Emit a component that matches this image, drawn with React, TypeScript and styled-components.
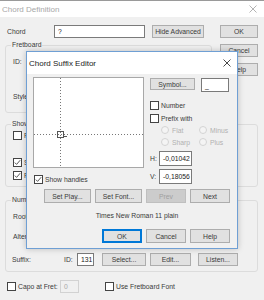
import styled, { createGlobalStyle } from 'styled-components';

const GlobalStyle = createGlobalStyle`
  html, body { margin: 0; padding: 0; }
  body {
    width: 264px;
    height: 300px;
    overflow: hidden;
    background: #f0f0f0;
    font-family: 'Liberation Sans', Arial, sans-serif;
    font-size: 6.8px;
    color: #3a3a3a;
  }
`;

const CheckMark = () => (
  <svg width="7" height="7" viewBox="0 0 7 7">
    <polyline points="0.8,3.6 2.6,5.4 6.2,1.2" fill="none" stroke="#444" strokeWidth="0.9" />
  </svg>
);

const CloseIcon = ({ color }: { color: string }) => (
  <svg width="8" height="8" viewBox="0 0 8 8">
    <path d="M0.5 0.5 L7.5 7.5 M7.5 0.5 L0.5 7.5" stroke={color} strokeWidth="0.9" />
  </svg>
);

const Check = ({ checked, label, mt }: { checked?: boolean; label: string; mt?: number }) => (
  <CheckRow $mt={mt}>
    <Box>{checked && <CheckMark />}</Box>
    <span>{label}</span>
  </CheckRow>
);

const Radio = ({ label }: { label: string }) => (
  <RadioRow>
    <Dot />
    <span>{label}</span>
  </RadioRow>
);

export default function App() {
  return (
    <>
      <GlobalStyle />
      <Window>
        <TitleBar>
          <Title $active={false}>Chord Definition</Title>
          <CloseIcon color="#aaa" />
        </TitleBar>
        <Body>
          <TopGrid>
            <LeftCol>
              <ChordRow>
                <Label $w={47}>Chord</Label>
                <TextInput $w={91}>?</TextInput>
                <Button $w={52}>Hide Advanced</Button>
              </ChordRow>
              <Group $h={72}>
                <legend>Fretboard</legend>
                <GroupRow>
                  <Label $w={40}>ID:</Label>
                </GroupRow>
                <GroupRow $top={22}>
                  <Label $w={40}>Style</Label>
                </GroupRow>
              </Group>
            </LeftCol>
            <RightCol>
              <Button $w={38}>OK</Button>
              <Button $w={38}>Cancel</Button>
              <Button $w={38}>Help</Button>
            </RightCol>
          </TopGrid>

          <Group $h={67} $mt={7}>
            <legend>Show</legend>
            <ShowList>
              <Check label="Root" />
              <Check checked label="Suffix" mt={18} />
              <Check checked label="Fret" mt={4} />
            </ShowList>
          </Group>

          <Group $h={76} $mt={9}>
            <legend>Numeric</legend>
            <GroupRow $top={4}>
              <Label $w={40}>Root</Label>
            </GroupRow>
            <GroupRow $top={7}>
              <Label $w={40}>Alteration</Label>
            </GroupRow>
            <SuffixRow>
              <Label $w={52}>Suffix:</Label>
              <Label $w={13}>ID:</Label>
              <TextInput $w={17}>131</TextInput>
              <Button $w={44} $ml={8}>Select...</Button>
              <Button $w={41} $ml={4}>Edit...</Button>
              <Button $w={40} $ml={7}>Listen...</Button>
            </SuffixRow>
          </Group>

          <BottomRow>
            <Check label="Capo at Fret:" />
            <TextInput $w={19} $disabled>0</TextInput>
            <BottomCheck>
              <Check label="Use Fretboard Font" />
            </BottomCheck>
          </BottomRow>
        </Body>

        <Dialog>
          <DialogTitle>
            <Title $active>Chord Suffix Editor</Title>
            <CloseIcon color="#333" />
          </DialogTitle>
          <DialogBody>
            <EditorArea>
              <CanvasCol>
                <Canvas>
                  <svg width="109" height="89" viewBox="0 0 109 89">
                    <line x1="26.5" y1="0" x2="26.5" y2="89" stroke="#777" strokeWidth="1" strokeDasharray="1 2" />
                    <line x1="0" y1="56.5" x2="109" y2="56.5" stroke="#777" strokeWidth="1" strokeDasharray="1 2" />
                    <rect x="23.5" y="53.5" width="6" height="6" fill="none" stroke="#555" strokeWidth="1" />
                    <line x1="29.5" y1="58.5" x2="33" y2="58.5" stroke="#555" strokeWidth="1" />
                  </svg>
                </Canvas>
                <Check checked label="Show handles" />
              </CanvasCol>
              <Controls>
                <SymbolRow>
                  <Button $w={45} $h={12}>Symbol...</Button>
                  <TextInput $w={28} $h={14}>_</TextInput>
                </SymbolRow>
                <Check label="Number" mt={9} />
                <Check label="Prefix with" mt={4} />
                <RadioGrid>
                  <Radio label="Flat" />
                  <Radio label="Minus" />
                  <Radio label="Sharp" />
                  <Radio label="Plus" />
                </RadioGrid>
                <CoordRow $mt={5}>
                  <span>H:</span>
                  <TextInput $w={33} $h={15}>-0,01042</TextInput>
                </CoordRow>
                <CoordRow $mt={3}>
                  <span>V:</span>
                  <TextInput $w={33} $h={15}>-0,18056</TextInput>
                </CoordRow>
              </Controls>
            </EditorArea>
            <Footer>
              <ButtonRow>
                <Button $w={47} $h={14}>Set Play...</Button>
                <Button $w={47} $h={14}>Set Font...</Button>
                <Button $w={40} $h={14} $disabled>Prev</Button>
                <Button $w={40} $h={14}>Next</Button>
              </ButtonRow>
              <FontName>Times New Roman 11 plain</FontName>
              <ButtonRow>
                <Button $w={40} $h={14} $default>OK</Button>
                <Button $w={40} $h={14}>Cancel</Button>
                <Button $w={40} $h={14}>Help</Button>
              </ButtonRow>
            </Footer>
          </DialogBody>
        </Dialog>
      </Window>
    </>
  );
}

const Window = styled.div`
  position: relative;
  width: 264px;
  height: 300px;
  border-top: 1px solid #9a9a9a;
  box-sizing: border-box;
  background: #f0f0f0;
`;

const TitleBar = styled.div`
  height: 16px;
  background: #fff;
  display: flex;
  align-items: center;
  justify-content: space-between;
  padding: 0 7px 0 2px;
`;

const Title = styled.span<{ $active: boolean }>`
  font-size: 8px;
  color: ${(p) => (p.$active ? '#222' : '#a8a8a8')};
`;

const Body = styled.div`
  padding: 8px 6px 0 5px;
`;

const TopGrid = styled.div`
  display: grid;
  grid-template-columns: 1fr 38px;
  column-gap: 8px;
`;

const LeftCol = styled.div`
  display: flex;
  flex-direction: column;
`;

const RightCol = styled.div`
  display: flex;
  flex-direction: column;
  gap: 6px;
`;

const ChordRow = styled.div`
  display: flex;
  align-items: center;
  height: 13px;
  padding-left: 2px;
  & > button { margin-left: 7px; }
`;

const Label = styled.span<{ $w: number }>`
  display: inline-block;
  width: ${(p) => p.$w}px;
  flex: none;
  white-space: nowrap;
`;

const TextInput = styled.div<{ $w: number; $h?: number; $disabled?: boolean }>`
  box-sizing: border-box;
  width: ${(p) => p.$w}px;
  height: ${(p) => p.$h ?? 13}px;
  flex: none;
  display: flex;
  align-items: center;
  padding-left: 3px;
  background: ${(p) => (p.$disabled ? '#f0f0f0' : '#fff')};
  border: 1px solid ${(p) => (p.$disabled ? '#d2d2d2' : '#7a7a7a')};
  color: ${(p) => (p.$disabled ? '#a8a8a8' : '#222')};
  white-space: nowrap;
`;

const Button = styled.button<{ $w: number; $h?: number; $ml?: number; $disabled?: boolean; $default?: boolean }>`
  box-sizing: border-box;
  width: ${(p) => p.$w}px;
  height: ${(p) => p.$h ?? 13}px;
  margin-left: ${(p) => p.$ml ?? 0}px;
  flex: none;
  padding: 0;
  font: inherit;
  white-space: nowrap;
  background: ${(p) => (p.$disabled ? '#cccccc' : '#e1e1e1')};
  color: ${(p) => (p.$disabled ? '#a0a0a0' : '#3a3a3a')};
  border: 1px solid ${(p) => (p.$default ? '#0078d7' : p.$disabled ? '#bfbfbf' : '#adadad')};
  box-shadow: ${(p) => (p.$default ? 'inset 0 0 0 1px #0078d7' : 'none')};
`;

const Group = styled.fieldset<{ $h: number; $mt?: number }>`
  box-sizing: border-box;
  height: ${(p) => p.$h}px;
  margin: ${(p) => p.$mt ?? 3}px 0 0 0;
  padding: 2px 6px 0 6px;
  border: 1px solid #dcdcdc;
  border-radius: 3px;
  & > legend {
    padding: 0 1px;
    margin-left: -1px;
    line-height: 8px;
  }
`;

const GroupRow = styled.div<{ $top?: number }>`
  display: flex;
  align-items: center;
  height: 13px;
  margin-top: ${(p) => p.$top ?? 4}px;
  padding-left: 1px;
`;

const ShowList = styled.div`
  display: flex;
  flex-direction: column;
  padding-top: 1px;
  padding-left: 1px;
`;

const SuffixRow = styled.div`
  display: flex;
  align-items: center;
  height: 13px;
  margin-top: 10px;
`;

const BottomRow = styled.div`
  display: flex;
  align-items: center;
  height: 14px;
  margin-top: 7px;
  padding-left: 2px;
  & > div:first-child { width: 53px; }
`;

const BottomCheck = styled.div`
  margin-left: 26px;
`;

const CheckRow = styled.div<{ $mt?: number }>`
  display: flex;
  align-items: center;
  gap: 2px;
  height: 9px;
  margin-top: ${(p) => p.$mt ?? 0}px;
  white-space: nowrap;
`;

const Box = styled.span`
  box-sizing: border-box;
  width: 9px;
  height: 9px;
  flex: none;
  display: flex;
  align-items: center;
  justify-content: center;
  background: #fff;
  border: 1px solid #444;
`;

const RadioRow = styled.div`
  display: flex;
  align-items: center;
  gap: 3px;
  height: 8px;
  color: #b0b0b0;
`;

const Dot = styled.span`
  box-sizing: border-box;
  width: 8px;
  height: 8px;
  border-radius: 50%;
  border: 1px solid #d4d4d4;
  background: #f4f4f4;
`;

const Dialog = styled.div`
  position: absolute;
  left: 26px;
  top: 50px;
  width: 212px;
  height: 198px;
  box-sizing: border-box;
  border: 1px solid #6f9fd4;
  background: #f0f0f0;
  box-shadow: 0 0 6px rgba(0, 0, 0, 0.22);
  display: flex;
  flex-direction: column;
`;

const DialogTitle = styled.div`
  height: 22px;
  flex: none;
  background: #fff;
  display: flex;
  align-items: center;
  justify-content: space-between;
  padding: 0 6px 0 2px;
`;

const DialogBody = styled.div`
  padding: 3px 7px 0 6px;
  display: flex;
  flex-direction: column;
`;

const EditorArea = styled.div`
  display: flex;
  gap: 6px;
`;

const CanvasCol = styled.div`
  display: flex;
  flex-direction: column;
  gap: 7px;
  & > div:last-child { padding-left: 1px; }
`;

const Canvas = styled.div`
  box-sizing: border-box;
  width: 111px;
  height: 91px;
  background: #fff;
  border: 1px solid #a8a8a8;
  & > svg { display: block; }
`;

const Controls = styled.div`
  display: flex;
  flex-direction: column;
  padding-top: 1px;
`;

const SymbolRow = styled.div`
  display: flex;
  align-items: flex-start;
  gap: 6px;
  height: 14px;
`;

const RadioGrid = styled.div`
  display: grid;
  grid-template-columns: 38px 38px;
  row-gap: 4px;
  padding-left: 11px;
  margin-top: 3px;
`;

const CoordRow = styled.div<{ $mt: number }>`
  display: flex;
  align-items: center;
  gap: 2px;
  margin-top: ${(p) => p.$mt}px;
  & > span { width: 7px; }
`;

const Footer = styled.div`
  display: flex;
  flex-direction: column;
  margin-left: 11px;
  margin-top: 5px;
`;

const ButtonRow = styled.div`
  display: flex;
  justify-content: flex-end;
  gap: 4px;
`;

const FontName = styled.div`
  text-align: center;
  height: 26px;
  line-height: 26px;
`;
